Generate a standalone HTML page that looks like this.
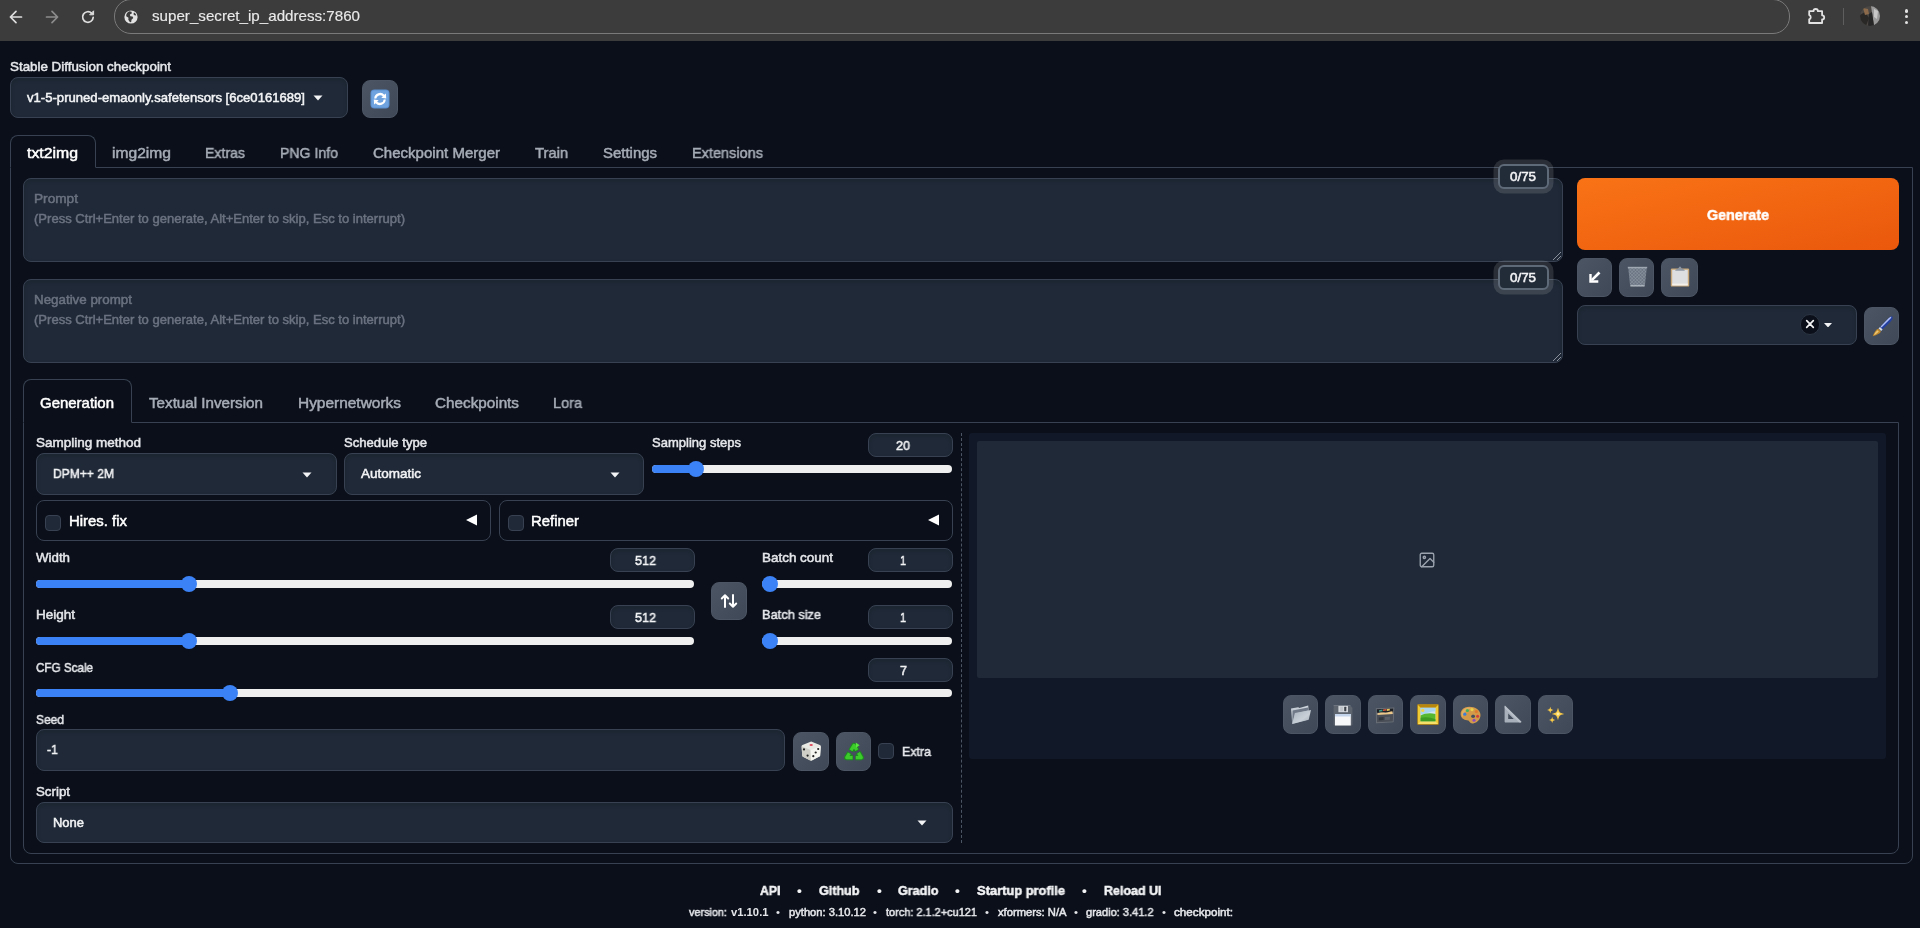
<!DOCTYPE html>
<html lang="en"><head><meta charset="utf-8"><title>Stable Diffusion</title>
<style>
*{box-sizing:border-box;margin:0;padding:0}
html,body{width:1920px;height:928px;overflow:hidden;background:#0b0f19}
body{font-family:'Liberation Sans',sans-serif;position:relative;color:#e5e7eb}
div,span,svg{position:absolute}
.t{white-space:pre;transform-origin:0 50%;display:block;will-change:transform;-webkit-text-stroke:0.5px currentColor}
.inp{background:#1f2937;border:1px solid #374151;border-radius:8px;box-shadow:inset 0 2px 4px rgba(0,0,0,.12)}
.num{background:#1f2937;border:1px solid #374151;border-radius:8px;box-shadow:inset 0 2px 4px rgba(0,0,0,.12)}
.btn{background:linear-gradient(to bottom right,#4b5563,#3f4856);border:1px solid #4b5563;border-radius:8px}
.chk{background:#1f2937;border:1px solid #374151;border-radius:4px;width:16px;height:16px}
.trk{height:8px;border-radius:4px;background:#efefef}
.fil{height:8px;border-radius:4px 0 0 4px;background:#3b82f6}
.thm{width:16px;height:16px;border-radius:50%;background:#3b82f6}
.acc{border:1px solid #374151;border-radius:8px}
</style></head>
<body>
<div style="left:0px;top:0px;width:1920px;height:41px;background:#3c3c3c"></div><div style="left:114px;top:-1px;width:1676px;height:35px;border:1px solid #7a7a7a;border-radius:17px;background:#3c3c3c"></div><svg style="left:8px;top:9px" width="16" height="16" viewBox="0 0 16 16" fill="none" stroke="#dedede" stroke-width="1.7" stroke-linecap="round" stroke-linejoin="round"><path d="M13.5 8H2.6M8 2.4L2.4 8 8 13.6"/></svg><svg style="left:44px;top:9px" width="16" height="16" viewBox="0 0 16 16" fill="none" stroke="#8c8c8c" stroke-width="1.7" stroke-linecap="round" stroke-linejoin="round"><path d="M2.5 8h10.9M8 2.4L13.6 8 8 13.6"/></svg><svg style="left:80px;top:9px" width="16" height="16" viewBox="0 0 16 16" fill="none" stroke="#dedede" stroke-width="1.7" stroke-linecap="round" stroke-linejoin="round"><path d="M13.2 8.4a5.3 5.3 0 1 1-1.6-4.2"/><path d="M13.6 2.2v3.6h-3.6z" fill="#dedede" stroke-width="1"/></svg><svg style="left:124px;top:10px" width="14" height="14" viewBox="0 0 14 14"><circle cx="7" cy="7" r="6.6" fill="#e2e2e2"/><path d="M5.2 1.2C3 2.6 2 4.3 2.2 6.2l2.3 1.5-.2 2 1.7 2.6 1.2-.4.3-2.2 1.8-1.6L8.600 6.500 6.300 6.200 5.900 4.600 7.800 3.600 7.600 1.700zM10 2.500l-.6 1.700 1.500 1.400 1.400-.3C12 4.200 11.200 3.100 10 2.500z" fill="#3c3c3c"/></svg><span class="t" style="left:152px;top:5.10px;line-height:23px;font-size:14.34px;color:#e9e9e9;transform:scaleX(1.0572);-webkit-text-stroke:0.15px currentColor">super_secret_ip_address:7860</span><svg style="left:1807px;top:7px" width="19" height="18" viewBox="0 0 19 18" fill="none" stroke="#e2e2e2" stroke-width="1.8" stroke-linejoin="round"><path d="M2.2 4.800h4.300a2.200 2.200 0 0 1 4.400 0h4.200v4.100a2.100 2.100 0 0 1 0 4.200v3.500H2.200v-3.700a2.200 2.200 0 0 0 0-4.200z" transform="translate(0,-0.600)"/></svg><div style="left:1843px;top:8px;width:1px;height:17px;background:#5e5e5e"></div><svg style="left:1860px;top:6px" width="20" height="20" viewBox="0 0 20 20"><defs><clipPath id="av"><circle cx="10" cy="10" r="10"/></clipPath></defs><g clip-path="url(#av)"><rect width="20" height="20" fill="#4a4744"/><path d="M11 0h9v20h-6z" fill="#9a9a9a"/><path d="M0 9l5-3 4 6-3 8H0z" fill="#2a2826"/><path d="M3 2l5 1 1 5-4 1z" fill="#8a6a4a"/><path d="M9 8l3-2 2 14H8z" fill="#262626"/><path d="M14 3l4 2-1 8-3-2z" fill="#c8c8c8"/></g></svg><div style="left:1904.6px;top:9.4px;width:3.2px;height:3.2px;border-radius:50%;background:#e2e2e2"></div><div style="left:1904.6px;top:15.1px;width:3.2px;height:3.2px;border-radius:50%;background:#e2e2e2"></div><div style="left:1904.6px;top:20.799999999999997px;width:3.2px;height:3.2px;border-radius:50%;background:#e2e2e2"></div><span class="t" style="left:10px;top:55.86px;line-height:21px;font-size:12.95px;color:#e5e7eb;transform:scaleX(1.0332);">Stable Diffusion checkpoint</span><div class="inp" style="left:10px;top:77px;width:338px;height:41px;"></div><span class="t" style="left:27px;top:87.36px;line-height:21px;font-size:12.95px;color:#f3f4f6;transform:scaleX(1.0128);">v1-5-pruned-emaonly.safetensors [6ce0161689]</span><svg style="left:313px;top:95px" width="10" height="6" viewBox="0 0 10 6"><path d="M0.500 0.500h9L5 5.500z" fill="#f3f4f6"/></svg><div class="btn" style="left:362px;top:80px;width:36px;height:38px;"></div><svg style="left:370px;top:89px" width="20" height="20" viewBox="0 0 20 20"><rect x="0.500" y="0.500" width="19" height="19" rx="4" fill="#5b8fd0"/><rect x="1.500" y="1.500" width="17" height="17" rx="3.200" fill="#6fa3e0"/><path d="M4.200 9.400a5.900 5.900 0 0 1 10.200-3.600l1.500-1.300.3 5-4.900-.8 1.600-1.400a3.900 3.900 0 0 0-6.600 2.300zM15.800 10.600a5.900 5.900 0 0 1-10.200 3.600l-1.500 1.300-.3-5 4.900.8-1.600 1.400a3.900 3.900 0 0 0 6.600-2.300z" fill="#fff"/></svg><div style="left:10px;top:167px;width:1903px;height:697px;border:1px solid #374151;border-radius:0 0 8px 8px;border-top-color:#374151"></div><div style="left:10px;top:135px;width:86px;height:33px;border:1px solid #374151;border-bottom:1px solid #0b0f19;border-radius:8px 8px 0 0;background:#0b0f19"></div><span class="t" style="left:27px;top:140.62px;line-height:24px;font-size:14.8px;color:#ffffff;transform:scaleX(1.0691);">txt2img</span><span class="t" style="left:112px;top:140.62px;line-height:24px;font-size:14.8px;color:#a6acb6;transform:scaleX(1.0550);">img2img</span><span class="t" style="left:205px;top:140.62px;line-height:24px;font-size:14.8px;color:#a6acb6;transform:scaleX(0.9538);">Extras</span><span class="t" style="left:280px;top:140.62px;line-height:24px;font-size:14.8px;color:#a6acb6;transform:scaleX(0.9530);">PNG Info</span><span class="t" style="left:373px;top:140.62px;line-height:24px;font-size:14.8px;color:#a6acb6;transform:scaleX(1.0159);">Checkpoint Merger</span><span class="t" style="left:535px;top:140.62px;line-height:24px;font-size:14.8px;color:#a6acb6;transform:scaleX(0.9948);">Train</span><span class="t" style="left:603px;top:140.62px;line-height:24px;font-size:14.8px;color:#a6acb6;transform:scaleX(1.0099);">Settings</span><span class="t" style="left:692px;top:140.62px;line-height:24px;font-size:14.8px;color:#a6acb6;transform:scaleX(0.9808);">Extensions</span><div class="inp" style="left:23px;top:178px;width:1540px;height:84px;"></div><span class="t" style="left:34px;top:188.36px;line-height:21px;font-size:12.95px;color:#6b7280;transform:scaleX(1.0551);">Prompt</span><span class="t" style="left:34px;top:208.36px;line-height:21px;font-size:12.95px;color:#6b7280;transform:scaleX(1.0077);">(Press Ctrl+Enter to generate, Alt+Enter to skip, Esc to interrupt)</span><div class="inp" style="left:23px;top:279px;width:1540px;height:84px;"></div><span class="t" style="left:34px;top:289.36px;line-height:21px;font-size:12.95px;color:#6b7280;transform:scaleX(1.0324);">Negative prompt</span><span class="t" style="left:34px;top:309.36px;line-height:21px;font-size:12.95px;color:#6b7280;transform:scaleX(1.0077);">(Press Ctrl+Enter to generate, Alt+Enter to skip, Esc to interrupt)</span><svg style="left:1551px;top:250px" width="11" height="11" viewBox="0 0 11 11" stroke="#8a919c" stroke-width="1"><path d="M10 2L2 10M10 6L6 10"/></svg><svg style="left:1551px;top:351px" width="11" height="11" viewBox="0 0 11 11" stroke="#8a919c" stroke-width="1"><path d="M10 2L2 10M10 6L6 10"/></svg><div style="left:1497.5px;top:164.0px;width:51.0px;height:24.5px;background:#222b38;border:2px solid #5f6a79;border-radius:6px;box-shadow:0 0 0 4.500px rgba(255,255,255,.13)"></div><span class="t" style="left:1510px;top:166.84px;line-height:20px;font-size:12.03px;color:#f3f4f6;transform:scaleX(1.1116);">0/75</span><div style="left:1497.5px;top:265.0px;width:51.0px;height:24.5px;background:#222b38;border:2px solid #5f6a79;border-radius:6px;box-shadow:0 0 0 4.500px rgba(255,255,255,.13)"></div><span class="t" style="left:1510px;top:267.84px;line-height:20px;font-size:12.03px;color:#f3f4f6;transform:scaleX(1.1116);">0/75</span><div style="left:1577px;top:178px;width:322px;height:72px;background:linear-gradient(to bottom right,#f97316,#ea580c);border-radius:8px"></div><span class="t" style="left:1707px;top:203.22px;line-height:24px;font-size:14.8px;color:#ffffff;transform:scaleX(0.9664);font-weight:700;">Generate</span><div class="btn" style="left:1577px;top:258px;width:35px;height:39px;"></div><div class="btn" style="left:1619px;top:258px;width:35px;height:39px;"></div><div class="btn" style="left:1661px;top:258px;width:37px;height:39px;"></div><div class="inp" style="left:1577px;top:304.5px;width:280px;height:40.5px;"></div><div class="btn" style="left:1864px;top:307px;width:35px;height:38px;"></div><svg style="left:1588.5px;top:271px" width="12" height="12" viewBox="0 0 12 12" ><path d="M10.500 1.500L2.800 9.200" stroke="#fff" stroke-width="2.600" stroke-linecap="butt" fill="none"/><path d="M1.500 3v7.500h7.800" stroke="#fff" stroke-width="2.400" fill="none" stroke-linejoin="miter"/></svg><svg style="left:1627px;top:266px" width="21" height="21" viewBox="0 0 21 21" ><defs><pattern id="mesh" width="2.400" height="2.400" patternUnits="userSpaceOnUse" patternTransform="rotate(45)"><rect width="2.400" height="2.400" fill="#6a7482"/><path d="M0 0h2.400M0 0v2.400" stroke="#9aa3af" stroke-width="0.700"/></pattern></defs><path d="M1.200 1.500h18.600l-1.900 18.200a1 1 0 0 1-1 .8H4.100a1 1 0 0 1-1-.8z" fill="url(#mesh)"/><path d="M0.800 0.800h19.400v1.500H0.800z" fill="#9ea7b2"/><path d="M3.400 19.200h14.200v1.200H3.400z" fill="#c4cad2" opacity=".8"/></svg><svg style="left:1670px;top:266px" width="20" height="21" viewBox="0 0 20 21" ><rect x="0.800" y="2.600" width="18.400" height="18" rx="1.200" fill="#c9a97a"/><rect x="2.200" y="3.800" width="15.600" height="15.600" fill="#dcdee0"/><rect x="2.200" y="17.600" width="15.600" height="1.800" fill="#f4f1ea"/><path d="M5.200 4.800c0-1.600 2.200-1.400 3-2.200C8.800 1.900 9.200.6 10 .6s1.200 1.300 1.800 2c.8.800 3 .6 3 2.200z" fill="#8d96a1"/></svg><div style="left:1799.500px;top:314px;width:20.500px;height:20.500px;border-radius:50%;background:#0b0f19;border:1px solid #2b3543"></div><svg style="left:1804.7px;top:319px" width="10" height="10" viewBox="0 0 10 10" ><path d="M1.700 1.700l6.600 6.600M8.300 1.700l-6.600 6.600" stroke="#f3f4f6" stroke-width="1.700" stroke-linecap="round"/></svg><svg style="left:1823.5px;top:322.6px" width="8" height="4.5" viewBox="0 0 8 4.500" ><path d="M0 0h8L4 4.500z" fill="#f3f4f6"/></svg><svg style="left:1871px;top:315px" width="22" height="22" viewBox="0 0 22 22" ><defs><linearGradient id="bh" x1="0" y1="0" x2="1" y2="1"><stop offset="0" stop-color="#d2dbfc"/><stop offset=".5" stop-color="#3557bd"/><stop offset="1" stop-color="#182f82"/></linearGradient></defs><path d="M21.200 1.500c1 1 .3 3-1.300 4.700l-8.500 8.300-2.400-2.400 8.300-8.500c1.700-1.600 3-3 3.900-2.100z" fill="#2340a0"/><path d="M20.300 1.700c-1-.2-2 .9-3.200 2.100l-7.500 7.700.9.900 7.800-7.600c1.200-1.200 2.200-2.300 2-3.100z" fill="#aebdf3"/><path d="M9 12l2.600 2.600-1.500 1.500-2.600-2.600z" fill="#d5dae2"/><path d="M7.300 13.800l2.600 2.600c-.7 2-3.600 3.400-8.200 4.800 1.500-3.900 3.300-6.900 5.600-7.400z" fill="#c08a2c"/><path d="M6.600 15.200c-1.500 1-2.800 2.900-3.700 4.900 1.200-.5 3.400-2 4.900-3.700z" fill="#ecc673"/></svg><div style="left:23px;top:422px;width:1876px;height:432px;border:1px solid #374151;border-radius:0 0 8px 8px"></div><div style="left:23px;top:379px;width:109px;height:44px;border:1px solid #374151;border-bottom:1px solid #0b0f19;border-radius:8px 8px 0 0;background:#0b0f19"></div><span class="t" style="left:40px;top:390.62px;line-height:24px;font-size:14.8px;color:#ffffff;transform:scaleX(1.0107);">Generation</span><span class="t" style="left:149px;top:390.62px;line-height:24px;font-size:14.8px;color:#a6acb6;transform:scaleX(1.0266);">Textual Inversion</span><span class="t" style="left:298px;top:390.62px;line-height:24px;font-size:14.8px;color:#a6acb6;transform:scaleX(1.0437);">Hypernetworks</span><span class="t" style="left:435px;top:390.62px;line-height:24px;font-size:14.8px;color:#a6acb6;transform:scaleX(1.0315);">Checkpoints</span><span class="t" style="left:553px;top:390.62px;line-height:24px;font-size:14.8px;color:#a6acb6;transform:scaleX(0.9789);">Lora</span><span class="t" style="left:36px;top:432.36px;line-height:21px;font-size:12.95px;color:#e5e7eb;transform:scaleX(1.0428);">Sampling method</span><div class="inp" style="left:36px;top:453px;width:301px;height:42px;"></div><span class="t" style="left:53px;top:463.36px;line-height:21px;font-size:12.95px;color:#f3f4f6;transform:scaleX(0.9322);">DPM++ 2M</span><svg style="left:301.500px;top:472px" width="10" height="6" viewBox="0 0 10 6"><path d="M0.500 0.500h9L5 5.500z" fill="#f3f4f6"/></svg><span class="t" style="left:344px;top:432.36px;line-height:21px;font-size:12.95px;color:#e5e7eb;transform:scaleX(1.0122);">Schedule type</span><div class="inp" style="left:344px;top:453px;width:300px;height:42px;"></div><span class="t" style="left:361px;top:463.36px;line-height:21px;font-size:12.95px;color:#f3f4f6;transform:scaleX(1.0429);">Automatic</span><svg style="left:609.500px;top:472px" width="10" height="6" viewBox="0 0 10 6"><path d="M0.500 0.500h9L5 5.500z" fill="#f3f4f6"/></svg><span class="t" style="left:652px;top:432.36px;line-height:21px;font-size:12.95px;color:#e5e7eb;transform:scaleX(1.0062);">Sampling steps</span><div class="num" style="left:868px;top:433px;width:85px;height:24px;"></div><span class="t" style="left:896.0px;top:435.36px;line-height:21px;font-size:12.95px;color:#f3f4f6;transform:scaleX(0.9729);">20</span><div class="trk" style="left:652px;top:465px;width:300px;height:8px;"></div><div class="fil" style="left:652px;top:465px;width:44px;height:8px;"></div><div class="thm" style="left:688px;top:461px"></div><div class="acc" style="left:36px;top:499.5px;width:455px;height:41.5px;"></div><div class="chk" style="left:45px;top:514.500px"></div><span class="t" style="left:69px;top:508.62px;line-height:24px;font-size:14.8px;color:#ffffff;transform:scaleX(1.0076);">Hires. fix</span><svg style="left:465px;top:513.500px" width="13" height="12" viewBox="0 0 13 12"><path d="M12 0.500v11L1 6z" fill="#ffffff"/></svg><div class="acc" style="left:498.5px;top:499.5px;width:454.5px;height:41.5px;"></div><div class="chk" style="left:507.500px;top:514.500px"></div><span class="t" style="left:531px;top:508.62px;line-height:24px;font-size:14.8px;color:#ffffff;transform:scaleX(1.0062);">Refiner</span><svg style="left:927px;top:513.500px" width="13" height="12" viewBox="0 0 13 12"><path d="M12 0.500v11L1 6z" fill="#ffffff"/></svg><span class="t" style="left:36px;top:547.36px;line-height:21px;font-size:12.95px;color:#e5e7eb;transform:scaleX(1.0279);">Width</span><div class="num" style="left:610px;top:548px;width:85px;height:24px;"></div><span class="t" style="left:634.5px;top:550.36px;line-height:21px;font-size:12.95px;color:#f3f4f6;transform:scaleX(0.9725);">512</span><div class="trk" style="left:36px;top:580px;width:658px;height:8px;"></div><div class="fil" style="left:36px;top:580px;width:153px;height:8px;"></div><div class="thm" style="left:181px;top:576px"></div><span class="t" style="left:36px;top:604.36px;line-height:21px;font-size:12.95px;color:#e5e7eb;transform:scaleX(1.0426);">Height</span><div class="num" style="left:610px;top:605px;width:85px;height:24px;"></div><span class="t" style="left:634.5px;top:607.36px;line-height:21px;font-size:12.95px;color:#f3f4f6;transform:scaleX(0.9725);">512</span><div class="trk" style="left:36px;top:637px;width:658px;height:8px;"></div><div class="fil" style="left:36px;top:637px;width:153px;height:8px;"></div><div class="thm" style="left:181px;top:633px"></div><div class="btn" style="left:711px;top:582px;width:36px;height:38px;"></div><svg style="left:720px;top:592px" width="18" height="18" viewBox="0 0 18 18" fill="none" stroke="#fff" stroke-width="2" stroke-linecap="round" stroke-linejoin="round"><path d="M5 15V3.500M1.800 6.500L5 3.200 8.200 6.500M13 3v11.500M9.800 11.500L13 14.800 16.200 11.500"/></svg><span class="t" style="left:762px;top:547.36px;line-height:21px;font-size:12.95px;color:#e5e7eb;transform:scaleX(1.0391);">Batch count</span><div class="num" style="left:868px;top:548px;width:85px;height:24px;"></div><span class="t" style="left:900.0px;top:550.36px;line-height:21px;font-size:12.95px;color:#f3f4f6;transform:scaleX(0.8330);">1</span><div class="trk" style="left:762px;top:580px;width:190px;height:8px;"></div><div class="fil" style="left:762px;top:580px;width:8px;height:8px;"></div><div class="thm" style="left:762px;top:576px"></div><span class="t" style="left:762px;top:604.36px;line-height:21px;font-size:12.95px;color:#e5e7eb;transform:scaleX(0.9885);">Batch size</span><div class="num" style="left:868px;top:605px;width:85px;height:24px;"></div><span class="t" style="left:900.0px;top:607.36px;line-height:21px;font-size:12.95px;color:#f3f4f6;transform:scaleX(0.8330);">1</span><div class="trk" style="left:762px;top:637px;width:190px;height:8px;"></div><div class="fil" style="left:762px;top:637px;width:8px;height:8px;"></div><div class="thm" style="left:762px;top:633px"></div><span class="t" style="left:36px;top:657.36px;line-height:21px;font-size:12.95px;color:#e5e7eb;transform:scaleX(0.9007);">CFG Scale</span><div class="num" style="left:868px;top:658px;width:85px;height:24px;"></div><span class="t" style="left:899.5px;top:660.36px;line-height:21px;font-size:12.95px;color:#f3f4f6;transform:scaleX(0.9718);">7</span><div class="trk" style="left:36px;top:689px;width:916px;height:8px;"></div><div class="fil" style="left:36px;top:689px;width:194px;height:8px;"></div><div class="thm" style="left:222px;top:685px"></div><span class="t" style="left:36px;top:709.36px;line-height:21px;font-size:12.95px;color:#e5e7eb;transform:scaleX(0.9266);">Seed</span><div class="inp" style="left:36px;top:729px;width:749px;height:42px;"></div><span class="t" style="left:47px;top:739.36px;line-height:21px;font-size:12.95px;color:#f3f4f6;transform:scaleX(0.9552);">-1</span><div class="btn" style="left:793px;top:732px;width:36px;height:39px;"></div><div class="btn" style="left:835.5px;top:732px;width:35.5px;height:39px;"></div><div class="chk" style="left:878px;top:743px"></div><span class="t" style="left:902px;top:741.36px;line-height:21px;font-size:12.95px;color:#e5e7eb;transform:scaleX(0.9602);">Extra</span><span class="t" style="left:36px;top:781.36px;line-height:21px;font-size:12.95px;color:#e5e7eb;transform:scaleX(1.0279);">Script</span><div class="inp" style="left:36px;top:802px;width:917px;height:41px;"></div><span class="t" style="left:53px;top:812.36px;line-height:21px;font-size:12.95px;color:#f3f4f6;transform:scaleX(1.0020);">None</span><svg style="left:917px;top:820px" width="10" height="6" viewBox="0 0 10 6"><path d="M0.500 0.500h9L5 5.500z" fill="#f3f4f6"/></svg><div style="left:961px;top:433px;width:1px;height:410px;border-left:1px dashed #4b5563"></div><div style="left:969px;top:433px;width:917px;height:326px;background:#111827;border-radius:3px"></div><div style="left:977px;top:440.5px;width:901px;height:237.5px;background:#1f2937;border-radius:2px"></div><svg style="left:1418px;top:551px" width="18" height="18" viewBox="0 0 24 24" fill="none" stroke="#9ca3af" stroke-width="1.800" stroke-linecap="round" stroke-linejoin="round"><rect x="3" y="3" width="18" height="18" rx="2"/><circle cx="8.500" cy="8.500" r="1.500"/><path d="M21 15l-5-5L5 21"/></svg><div class="btn" style="left:1282.5px;top:695px;width:35.5px;height:39px;"></div><div class="btn" style="left:1325.0px;top:695px;width:35.5px;height:39px;"></div><div class="btn" style="left:1367.5px;top:695px;width:35.5px;height:39px;"></div><div class="btn" style="left:1410.0px;top:695px;width:35.5px;height:39px;"></div><div class="btn" style="left:1452.5px;top:695px;width:35.5px;height:39px;"></div><div class="btn" style="left:1495.0px;top:695px;width:35.5px;height:39px;"></div><div class="btn" style="left:1537.5px;top:695px;width:35.5px;height:39px;"></div><svg style="left:800.5px;top:741px" width="21" height="20" viewBox="0 0 21 20" ><path d="M10.200.6l8.700 3.300c.6.200.9.700.9 1.300l-.6 9.300c0 .5-.3.900-.8 1.100l-7.600 3.800c-.5.200-1 .2-1.500 0L2 15.700c-.5-.2-.8-.7-.8-1.200L.6 5.200c0-.6.300-1.100.9-1.300z" fill="#e9e9e4"/><path d="M.6 5.200l9 3.700.4 10.700c-.3 0-.5-.1-.7-.2L2 15.700c-.5-.2-.8-.7-.8-1.200z" fill="#cfcfc8"/><path d="M19.800 5.200l-10.200 3.700.4 10.700c.3 0 .5-.1.700-.2l7.600-3.800c.5-.2.800-.6.800-1.100z" fill="#f4f4f0"/><ellipse cx="10.200" cy="3.900" rx="1.700" ry="1" fill="#e0485a"/><circle cx="3" cy="8.400" r="1.100" fill="#222"/><circle cx="6.600" cy="14.600" r="1.100" fill="#222"/><circle cx="17.200" cy="8" r="1.100" fill="#222"/><circle cx="14.700" cy="11.500" r="1.100" fill="#222"/><circle cx="12.300" cy="15.200" r="1.100" fill="#222"/></svg><svg style="left:843.5px;top:741.5px" width="20" height="19" viewBox="0 0 20 19" ><path d="M10 3.400L17.300 15.600H2.700z" fill="none" stroke="#1d8a20" stroke-width="5.200" stroke-linejoin="round" stroke-dasharray="12 2.220" stroke-dashoffset="6"/><path d="M10 3.400L17.300 15.600H2.700z" fill="none" stroke="#3ccb2a" stroke-width="3.200" stroke-linejoin="round" stroke-dasharray="11 3.220" stroke-dashoffset="5.500"/><path d="M11.800 .6l3.800 2.700-3.600 2.500z" fill="#58e540"/><circle cx="10" cy="11.200" r="1.600" fill="#465060"/></svg><svg style="left:1289.75px;top:705.0px" width="22" height="20" viewBox="0 0 22 20" ><defs><linearGradient id="fo" x1="0" y1="0" x2="1" y2="1"><stop offset="0" stop-color="#a7b1bd"/><stop offset=".6" stop-color="#c9d0d8"/><stop offset="1" stop-color="#9aa4b0"/></linearGradient><linearGradient id="fb" x1="0" y1="0" x2="0" y2="1"><stop offset="0" stop-color="#d3d9e0"/><stop offset="1" stop-color="#8e98a6"/></linearGradient></defs><path d="M1 3.600L8.200 2.200 9.400 3.100 18.200 .5 18.600 5.200 17.500 14.800 2.200 18.900z" fill="url(#fb)"/><path d="M2.600 5.400L18 2.400 18.400 5.600 5.200 8.400 2.600 17.500z" fill="#6f7987"/><path d="M4.900 8L21 5 18.700 14.700 2.200 18.900z" fill="url(#fo)"/></svg><svg style="left:1333.0px;top:704.5px" width="20" height="21" viewBox="0 0 20 21" ><path d="M.6 .6h16.600L19.400 2.800v17c0 .4-.3.700-.7.700H1.300c-.4 0-.7-.3-.7-.7z" fill="#5d646e"/><path d="M.6 .6h16.600l.5.500H.6z" fill="#8a9099"/><rect x="5.400" y=".9" width="9.600" height="6.300" fill="#d3d6db"/><rect x="11.200" y="1.700" width="2.100" height="4.500" rx=".6" fill="#3f444c"/><rect x="7.200" y="1.700" width="2.800" height="4.500" fill="#bfc3ca"/><rect x="2" y="9" width="15.800" height="11.500" fill="#f7f8fa"/><rect x="2" y="9" width="15.800" height="2.500" fill="#c3d4ea"/></svg><svg style="left:1375.25px;top:707.0px" width="20" height="17" viewBox="0 0 20 17" ><path d="M.8 1.200L19.300 .4 18.600 15.200 1 16.200z" fill="#6b7078"/><path d="M1.800 2.200L18.300 1.400 18.100 5.200 1.900 5.800z" fill="#1d2025"/><path d="M4 3.200l3.500-.6v1.600L4 4.800z" fill="#3f9b8a"/><path d="M8 2.400l3.400-.5v1.700L8 4.100z" fill="#d9573f"/><path d="M11.800 2l3-.3v1.800l-3 .4z" fill="#e2c25a"/><path d="M2.400 6.600c3-1.800 6-1 8-.9 2.500 0 4.500-1.200 7-1.400l.4 3.400-15 1z" fill="#ecc88a"/><path d="M1.800 8L18.200 7 17.800 14.400 1.900 15.300z" fill="#4a4f57"/><path d="M3.800 10.400l4.800-.3v3l-4.800.3z" fill="#33373e"/><path d="M10 10l5-.3-.1 3-4.900.3z" fill="#5b6068"/></svg><svg style="left:1416.75px;top:704.1px" width="22" height="21" viewBox="0 0 22 21" ><rect x=".3" y=".3" width="21.400" height="20.400" rx=".8" fill="#c9940f"/><rect x="1" y="1" width="20" height="19" fill="#efcb35"/><path d="M1 1h20l-3 3H4z" fill="#b8860b"/><path d="M1 20h20l-3-3H4z" fill="#f7e06a"/><rect x="3.600" y="3.800" width="14.800" height="13.400" fill="#cfe6f3"/><path d="M3.600 3.800h14.800v3.500c-5 .5-10 2-14.800 3.500z" fill="#a9d5ee"/><path d="M3.600 11.500c4-2 9-2.800 14.800-1.500v7.200H3.600z" fill="#55b82e"/><path d="M3.600 13.800c5-1 10-.5 14.800 1.500v1.900H3.600z" fill="#3e9c22"/><circle cx="5.800" cy="6.400" r="1.600" fill="#f4d648"/></svg><svg style="left:1459.75px;top:705.5px" width="21" height="18" viewBox="0 0 21 18" ><path d="M9.200.8C4.200.8.600 4 .6 8c0 3.600 3 6 6.400 6.300 1.700.1 2.200.9 2.700 1.800.7 1.300 2.200 1.600 4.200 1.100 3.800-.9 6.600-4.300 6.600-8.300 0-4.600-5.100-8.100-11.300-8.100zm3.900 11.100c-1.100 0-2-.7-2-1.600s.9-1.600 2-1.600 2 .7 2 1.600-.9 1.600-2 1.600z" fill="#d39a4a" fill-rule="evenodd"/><path d="M9.200 1.600C5 1.600 1.600 4.300 1.600 7.800c0 1.300.5 2.500 1.300 3.400C3 7 6.500 3.500 12.500 2.100c-1-.3-2.100-.5-3.300-.5z" fill="#e5b468" opacity=".8"/><circle cx="4.800" cy="8.200" r="1.600" fill="#3d7ed6"/><circle cx="7.400" cy="4.500" r="1.600" fill="#43b05c"/><circle cx="12" cy="3.600" r="1.600" fill="#e9d24a"/><circle cx="16.400" cy="5.600" r="1.600" fill="#e07b2e"/><circle cx="17.600" cy="10.300" r="1.500" fill="#d13b3b"/><circle cx="14" cy="14.300" r="1.500" fill="#8a4bc2"/></svg><svg style="left:1503.75px;top:705.0px" width="18" height="18" viewBox="0 0 18 18" ><path d="M1.400 1l15.800 15.600c.3.300.1.800-.3.800H1.600c-.6 0-1-.4-1-1V1.300c0-.4.500-.6.800-.3zM4.200 8.500v5.500h5.600z" fill="#a8b0bb" fill-rule="evenodd"/><path d="M1.400 1L17.200 16.600c.3.300.1.800-.3.800h-1.700L.6 3V1.300c0-.4.500-.6.800-.3z" fill="#c8ced6" opacity=".55"/></svg><svg style="left:1545.75px;top:705.0px" width="19" height="19" viewBox="0 0 19 19" ><path d="M12 2.8C13.364 7.636 13.364 7.636 18.2 9C13.364 10.364 13.364 10.364 12 15.2C10.636 10.364 10.636 10.364 5.8 9C10.636 7.636 10.636 7.636 12 2.8z" fill="#f7c948"/><path d="M4.3 1.7000000000000002C5.026 4.274 5.026 4.274 7.6 5C5.026 5.726 5.026 5.726 4.3 8.3C3.574 5.726 3.574 5.726 1.0 5C3.574 4.274 3.574 4.274 4.3 1.7000000000000002z" fill="#f7c948"/><path d="M6.2 11.8C6.904 14.296 6.904 14.296 9.4 15C6.904 15.704 6.904 15.704 6.2 18.2C5.496 15.704 5.496 15.704 3.0 15C5.496 14.296 5.496 14.296 6.2 11.8z" fill="#f7c948"/><path d="M12 6.6C12.528 8.472 12.528 8.472 14.4 9C12.528 9.528 12.528 9.528 12 11.4C11.472 9.528 11.472 9.528 9.6 9C11.472 8.472 11.472 8.472 12 6.6z" fill="#fff3b0"/></svg><span class="t" style="left:760px;top:880.36px;line-height:21px;font-size:12.95px;color:#f3f4f6;transform:scaleX(0.9500);font-weight:700;">API</span><span class="t" style="left:819px;top:880.36px;line-height:21px;font-size:12.95px;color:#f3f4f6;transform:scaleX(0.9715);font-weight:700;">Github</span><span class="t" style="left:898px;top:880.36px;line-height:21px;font-size:12.95px;color:#f3f4f6;transform:scaleX(0.9712);font-weight:700;">Gradio</span><span class="t" style="left:977px;top:880.36px;line-height:21px;font-size:12.95px;color:#f3f4f6;transform:scaleX(0.9952);font-weight:700;">Startup profile</span><span class="t" style="left:1103.5px;top:880.36px;line-height:21px;font-size:12.95px;color:#f3f4f6;transform:scaleX(0.9636);font-weight:700;">Reload UI</span><span class="t" style="left:797.3000000000001px;top:880.36px;line-height:21px;font-size:12.95px;color:#f3f4f6;transform:scaleX(1.0593);font-weight:700;-webkit-text-stroke:0">•</span><span class="t" style="left:876.6px;top:880.36px;line-height:21px;font-size:12.95px;color:#f3f4f6;transform:scaleX(1.0593);font-weight:700;-webkit-text-stroke:0">•</span><span class="t" style="left:955.2px;top:880.36px;line-height:21px;font-size:12.95px;color:#f3f4f6;transform:scaleX(1.0593);font-weight:700;-webkit-text-stroke:0">•</span><span class="t" style="left:1082.0px;top:880.36px;line-height:21px;font-size:12.95px;color:#f3f4f6;transform:scaleX(1.0593);font-weight:700;-webkit-text-stroke:0">•</span><span class="t" style="left:689px;top:902.81px;line-height:18px;font-size:11.1px;color:#e5e7eb;transform:scaleX(0.9776);">version: </span><span class="t" style="left:730.5px;top:902.81px;line-height:18px;font-size:11.1px;color:#e5e7eb;transform:scaleX(1.0131);font-weight:700;-webkit-text-stroke:0">v1.10.1</span><span class="t" style="left:788.5px;top:902.81px;line-height:18px;font-size:11.1px;color:#e5e7eb;transform:scaleX(1.0065);">python: 3.10.12</span><span class="t" style="left:886px;top:902.81px;line-height:18px;font-size:11.1px;color:#e5e7eb;transform:scaleX(0.9868);">torch: 2.1.2+cu121</span><span class="t" style="left:997.5px;top:902.81px;line-height:18px;font-size:11.1px;color:#e5e7eb;transform:scaleX(1.0101);">xformers: N/A</span><span class="t" style="left:1086px;top:902.81px;line-height:18px;font-size:11.1px;color:#e5e7eb;transform:scaleX(0.9947);">gradio: 3.41.2</span><span class="t" style="left:1174px;top:902.81px;line-height:18px;font-size:11.1px;color:#e5e7eb;transform:scaleX(1.0512);">checkpoint:</span><span class="t" style="left:776px;top:902.81px;line-height:18px;font-size:11.1px;color:#e5e7eb;transform:scaleX(1.0281);-webkit-text-stroke:0">•</span><span class="t" style="left:873.4px;top:902.81px;line-height:18px;font-size:11.1px;color:#e5e7eb;transform:scaleX(1.0281);-webkit-text-stroke:0">•</span><span class="t" style="left:985.3px;top:902.81px;line-height:18px;font-size:11.1px;color:#e5e7eb;transform:scaleX(1.0281);-webkit-text-stroke:0">•</span><span class="t" style="left:1073.8px;top:902.81px;line-height:18px;font-size:11.1px;color:#e5e7eb;transform:scaleX(1.0281);-webkit-text-stroke:0">•</span><span class="t" style="left:1162px;top:902.81px;line-height:18px;font-size:11.1px;color:#e5e7eb;transform:scaleX(1.0281);-webkit-text-stroke:0">•</span>
</body></html>
